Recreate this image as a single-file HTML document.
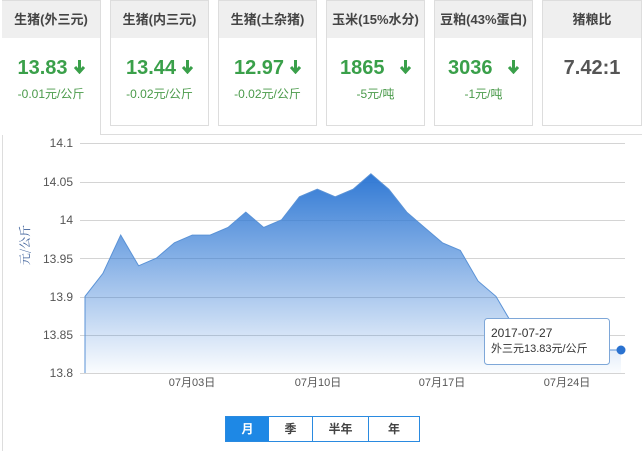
<!DOCTYPE html>
<html><head><meta charset="utf-8"><style>
*{margin:0;padding:0;box-sizing:border-box}
body{width:642px;height:451px;background:#fff;font-family:"Liberation Sans","Microsoft YaHei","Noto Sans CJK SC",sans-serif;position:relative;overflow:hidden}
.card{position:absolute;top:0;height:126px;border:1px solid #ddd;background:#fff;text-align:center}
.card .h{height:37px;background:#efefef;line-height:37px;font-size:13px;color:#444;font-weight:bold}
.card .v{margin-top:17px;font-size:20px;font-weight:bold;color:#3aa04a;height:26px;line-height:26px}
.card .d{margin-top:4px;font-size:12px;color:#4a9a4a}
.arr{display:inline-block;vertical-align:middle;margin-left:6px;margin-top:-4px}
</style></head><body>
<div style="position:absolute;left:100px;top:134px;width:542px;height:1px;background:#ddd"></div>
<div style="position:absolute;left:2px;top:0;width:1px;height:451px;background:#ddd"></div>
<div class="card" style="left:2px;width:99px;height:135px;border-bottom:none;border-left:none"><div class="h">生猪(外三元)</div><div class="v">13.83<svg class="arr" width="11" height="15" viewBox="0 0 11 15"><path d="M5.5 1V12M1 8l4.5 5 4.5-5" stroke="#3aa04a" stroke-width="3" fill="none"/></svg></div><div class="d">-0.01元/公斤</div></div>
<div class="card" style="left:110px;width:99px"><div class="h">生猪(内三元)</div><div class="v">13.44<svg class="arr" width="11" height="15" viewBox="0 0 11 15"><path d="M5.5 1V12M1 8l4.5 5 4.5-5" stroke="#3aa04a" stroke-width="3" fill="none"/></svg></div><div class="d">-0.02元/公斤</div></div>
<div class="card" style="left:218px;width:99px"><div class="h">生猪(土杂猪)</div><div class="v">12.97<svg class="arr" width="11" height="15" viewBox="0 0 11 15"><path d="M5.5 1V12M1 8l4.5 5 4.5-5" stroke="#3aa04a" stroke-width="3" fill="none"/></svg></div><div class="d">-0.02元/公斤</div></div>
<div class="card" style="left:326px;width:99px"><div class="h">玉米(15%水分)</div><div class="v">1865 <svg class="arr" style="margin-left:10px" width="11" height="15" viewBox="0 0 11 15"><path d="M5.5 1V12M1 8l4.5 5 4.5-5" stroke="#3aa04a" stroke-width="3" fill="none"/></svg></div><div class="d">-5元/吨</div></div>
<div class="card" style="left:434px;width:99px"><div class="h">豆粕(43%蛋白)</div><div class="v">3036 <svg class="arr" style="margin-left:10px" width="11" height="15" viewBox="0 0 11 15"><path d="M5.5 1V12M1 8l4.5 5 4.5-5" stroke="#3aa04a" stroke-width="3" fill="none"/></svg></div><div class="d">-1元/吨</div></div>
<div class="card" style="left:542px;width:100px"><div class="h">猪粮比</div><div class="v" style="color:#555">7.42:1</div></div>

<svg style="position:absolute;left:0;top:0" width="642" height="451">
<defs><linearGradient id="g" x1="0" y1="173" x2="0" y2="373" gradientUnits="userSpaceOnUse"><stop offset="0" stop-color="#2f78d4"/><stop offset="1" stop-color="#2f78d4" stop-opacity="0.02"/></linearGradient></defs>
<g stroke="#d4d4d4" stroke-width="1">
<line x1="80" y1="143.5" x2="625" y2="143.5"/><line x1="80" y1="182.5" x2="625" y2="182.5"/><line x1="80" y1="220.5" x2="625" y2="220.5"/><line x1="80" y1="258.5" x2="625" y2="258.5"/><line x1="80" y1="297.5" x2="625" y2="297.5"/><line x1="80" y1="335.5" x2="625" y2="335.5"/><line x1="80" y1="373.5" x2="625" y2="373.5"/>
</g>
<path d="M85 296.4L102.9 273.4L120.7 235.1L138.6 265.8L156.5 258.1L174.4 242.8L192.2 235.1L210.1 235.1L228 227.5L245.8 212.1L263.7 227.5L281.6 219.8L299.4 196.8L317.3 189.2L335.2 196.8L353.1 189.2L370.9 173.8L388.8 189.2L406.7 212.1L424.5 227.5L442.4 242.8L460.3 250.4L478.1 281.1L496 296.4L513.9 327L531.8 342.4L549.6 350L567.5 350L585.4 350L603.2 350L621 350L621 373L85 373Z" fill="url(#g)" stroke="none"/>
<path d="M85 373L85 296.4L102.9 273.4L120.7 235.1L138.6 265.8L156.5 258.1L174.4 242.8L192.2 235.1L210.1 235.1L228 227.5L245.8 212.1L263.7 227.5L281.6 219.8L299.4 196.8L317.3 189.2L335.2 196.8L353.1 189.2L370.9 173.8L388.8 189.2L406.7 212.1L424.5 227.5L442.4 242.8L460.3 250.4L478.1 281.1L496 296.4L513.9 327L531.8 342.4L549.6 350L567.5 350L585.4 350L603.2 350L621 350" fill="none" stroke="#5a92d6" stroke-width="1"/>
<circle cx="621" cy="350" r="4.5" fill="#2a72d0"/>
<g font-size="12" fill="#555" text-anchor="end" font-family="Liberation Sans,sans-serif">
<text x="73" y="147">14.1</text><text x="73" y="186">14.05</text><text x="73" y="224">14</text><text x="73" y="263">13.95</text><text x="73" y="301">13.9</text><text x="73" y="339">13.85</text><text x="73" y="377">13.8</text>
</g>
<g font-size="11" fill="#555" text-anchor="middle" font-family="Liberation Sans,Noto Sans CJK SC,sans-serif">
<text x="192" y="386">07月03日</text><text x="318" y="386">07月10日</text><text x="442" y="386">07月17日</text><text x="567" y="386">07月24日</text>
</g>
<text transform="translate(29,245) rotate(-90)" text-anchor="middle" font-size="12" fill="#3c5f99" font-family="Noto Serif CJK SC,serif">元/公斤</text>
<rect x="484.5" y="318.5" width="125" height="46" rx="3" fill="#fff" stroke="#7ea7d8"/>
<text x="491" y="337" font-size="12" fill="#333" font-family="Liberation Sans,sans-serif">2017-07-27</text>
<text x="491" y="352" font-size="11" fill="#333" font-family="Liberation Sans,Noto Sans CJK SC,sans-serif">外三元13.83元/公斤</text>
</svg>

<div style="position:absolute;left:225px;top:416px;width:195px;height:26px;border:1px solid #2a8ae0;display:flex;font-size:12px;font-weight:bold;color:#444">
<div style="width:43px;background:#1e88e5;color:#fff;text-align:center;line-height:24px">月</div>
<div style="width:44px;text-align:center;line-height:24px;border-right:1px solid #2a8ae0">季</div>
<div style="width:56px;text-align:center;line-height:24px;border-right:1px solid #2a8ae0">半年</div>
<div style="flex:1;text-align:center;line-height:24px">年</div>
</div>
</body></html>
